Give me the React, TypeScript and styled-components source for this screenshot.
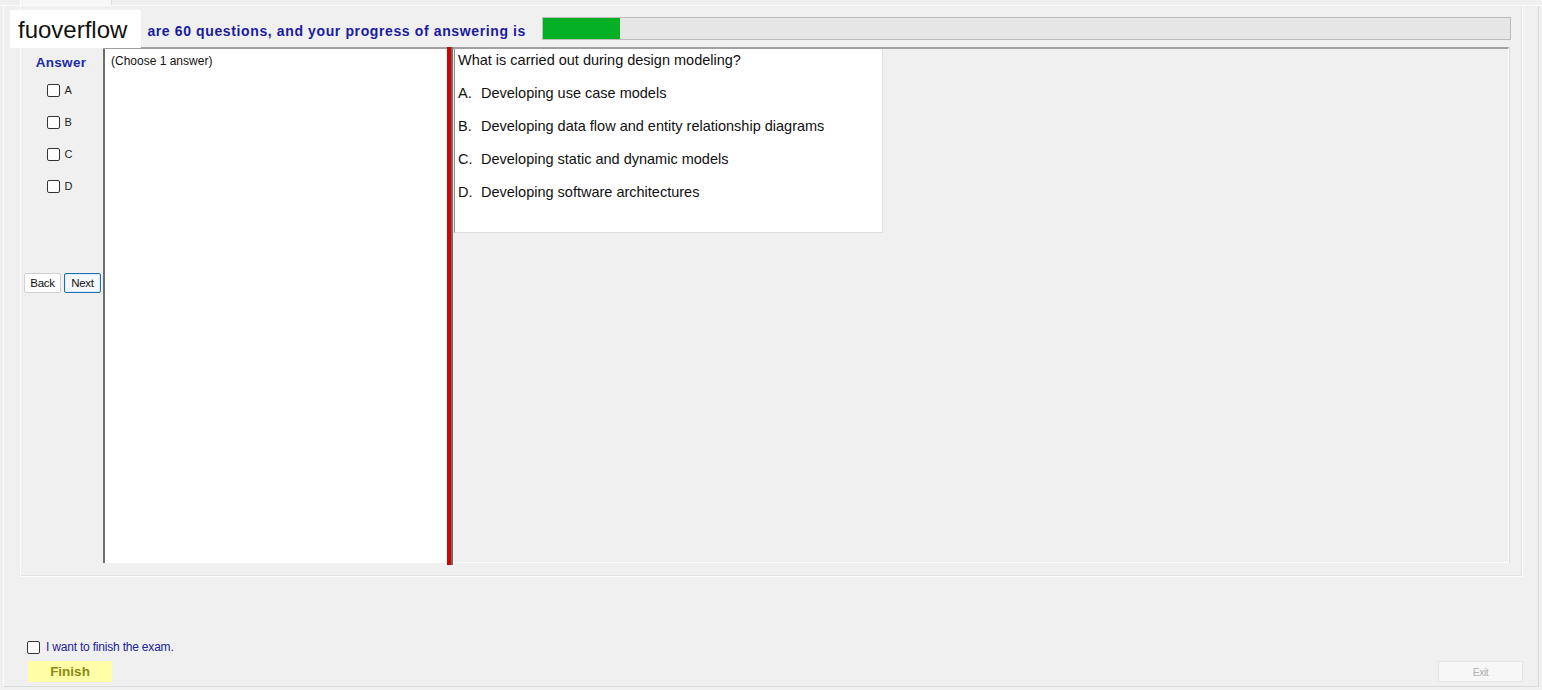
import React from "react";
import styled, { createGlobalStyle } from "styled-components";

const GlobalStyle = createGlobalStyle`
  html, body {
    margin: 0;
    padding: 0;
    background: #f0f0f0;
    font-family: "Liberation Sans", Arial, sans-serif;
  }
`;

const Window = styled.div`
  position: relative;
  width: 1542px;
  height: 690px;
  background: #f0f0f0;
  overflow: hidden;
`;

const TabStrip = styled.div`
  height: 5px;
  border-bottom: 1px solid #fbfbfb;
  display: flex;
  padding-left: 20px;
`;

const Tab = styled.div`
  width: 90px;
  height: 5px;
  background: #f7f7f7;
  border-left: 1px solid #fdfdfd;
  border-right: 1px solid #dcdcdc;
`;

const TabPage = styled.div`
  margin-left: 3px;
  width: 1536px;
  height: 681px;
  border-left: 1px solid #fafafa;
  border-right: 1px solid #dadada;
  border-bottom: 1px solid #dadada;
  box-sizing: border-box;
  display: flex;
  flex-direction: column;
`;

const Group = styled.div`
  margin-left: 16px;
  width: 1503px;
  height: 571px;
  box-sizing: border-box;
  border: 1px solid #fbfbfb;
  border-top: none;
  box-shadow: inset -1px -1px 0 #e2e2e2;
  display: flex;
  flex-direction: column;
`;

const HeaderRow = styled.div`
  display: flex;
  align-items: center;
  height: 24px;
  margin-top: 10px;
`;

const HeaderText = styled.div`
  font-size: 14px;
  letter-spacing: 0.62px;
  font-weight: bold;
  color: #1b1b9e;
  width: 505px;
  white-space: nowrap;
  text-align: right;
  padding-top: 6px;
`;

const Progress = styled.div`
  margin-left: 16px;
  width: 969px;
  height: 23px;
  box-sizing: border-box;
  border: 1px solid #bcbcbc;
  background: #e6e6e6;
`;

const ProgressFill = styled.div`
  height: 100%;
  background: #06b025;
`;

const ContentRow = styled.div`
  display: flex;
  margin-top: 7px;
  margin-left: 1px;
  width: 1487px;
  height: 516px;
`;

const AnswerCol = styled.div`
  width: 81px;
  display: flex;
  flex-direction: column;
  align-items: center;
  padding-top: 8px;
  box-sizing: border-box;
`;

const AnswerTitle = styled.div`
  font-size: 13.5px;
  letter-spacing: 0.3px;
  font-weight: bold;
  color: #1c2ca8;
  margin-left: -3px;
  margin-bottom: 13px;
`;

const OptionList = styled.div`
  display: flex;
  flex-direction: column;
  gap: 18px;
  margin-left: -6px;
`;

const OptionItem = styled.label`
  display: flex;
  align-items: center;
  gap: 5px;
  font-size: 11px;
  color: #222;
  height: 14px;
`;

const Box = styled.span<{ $size?: number }>`
  display: inline-block;
  width: ${(p) => p.$size ?? 11}px;
  height: ${(p) => p.$size ?? 11}px;
  border: 1px solid #333;
  border-radius: 2px;
  background: #fff;
`;

const NavRow = styled.div`
  display: flex;
  gap: 3px;
  margin-top: 80px;
  margin-left: 0px;
`;

const NavButton = styled.button<{ $focused?: boolean }>`
  font-family: "Liberation Sans", Arial, sans-serif;
  font-size: 11.5px;
  letter-spacing: -0.3px;
  color: #111;
  height: 20px;
  width: 37px;
  padding: 0;
  border-radius: 2px;
  background: ${(p) => (p.$focused ? "#f4f9fd" : "#fdfdfd")};
  border: 1px solid ${(p) => (p.$focused ? "#1f6fb2" : "#d0d0d0")};
  box-shadow: ${(p) => (p.$focused ? "inset 0 0 0 1px #d6ecfa" : "none")};
`;

const SplitArea = styled.div`
  flex: 1;
  display: flex;
  border-top: 2px solid #a0a0a0;
  border-right: 1px solid #fdfdfd;
  box-shadow: 1px 0 0 #dcdcdc;
`;

const ChoicePane = styled.div`
  width: 344px;
  background: #fff;
  border-left: 2px solid #6d6d6d;
  padding: 5px 0 0 6px;
  font-size: 12px;
  color: #111;
  box-sizing: border-box;
`;

const Splitter = styled.div`
  width: 6px;
  background: #d50000;
  border-right: 2px solid #6a6a6a;
  box-sizing: border-box;
  margin-top: -2px;
  height: 518px;
`;

const QuestionPane = styled.div`
  flex: 1;
  background: #f0f0f0;
  border-bottom: 1px solid #fbfbfb;
  padding-left: 1px;
`;

const QuestionBox = styled.div`
  width: 429px;
  height: 184px;
  box-sizing: border-box;
  background: #fff;
  border-left: 1px solid #8c8c8c;
  border-right: 1px solid #e0e0e0;
  border-bottom: 1px solid #e0e0e0;
  padding: 3px 0 0 3px;
  font-size: 14.5px;
  color: #111;
`;

const QuestionLine = styled.div`
  height: 33px;
  line-height: 17px;
  white-space: nowrap;
`;

const Letter = styled.span`
  display: inline-block;
  width: 23px;
`;

const Footer = styled.div`
  flex: 1;
  display: flex;
  justify-content: space-between;
  align-items: flex-end;
  padding: 0 15px 4px 23px;
`;

const FinishBlock = styled.div`
  display: flex;
  flex-direction: column;
  gap: 7px;
`;

const ConfirmLabel = styled.label`
  display: flex;
  align-items: center;
  gap: 6px;
  font-size: 12px;
  color: #22229a;
  letter-spacing: -0.2px;
`;

const FinishButton = styled.div`
  margin-left: 1px;
  width: 84px;
  height: 21px;
  background: #ffffa8;
  color: #8a8a14;
  font-size: 13.5px;
  font-weight: bold;
  display: flex;
  align-items: center;
  justify-content: center;
`;

const ExitButton = styled.div`
  width: 85px;
  height: 21px;
  box-sizing: border-box;
  background: #f7f7f7;
  border: 1px solid #e4e4e4;
  color: #b0b0b0;
  font-size: 10.5px;
  letter-spacing: -0.5px;
  display: flex;
  align-items: center;
  justify-content: center;
`;

const Watermark = styled.div`
  position: absolute;
  left: 10px;
  top: 10px;
  width: 131px;
  height: 38px;
  background: #fff;
  font-size: 24px;
  color: #111;
  padding: 7px 0 0 8px;
  box-sizing: border-box;
  line-height: 26px;
`;

const options = [
  "Developing use case models",
  "Developing data flow and entity relationship diagrams",
  "Developing static and dynamic models",
  "Developing software architectures",
];

export default function App() {
  const progress = 77 / 967;
  return (
    <Window>
      <GlobalStyle />
      <TabStrip>
        <Tab />
      </TabStrip>
      <TabPage>
        <Group>
          <HeaderRow>
            <HeaderText>are 60 questions, and your progress of answering is</HeaderText>
            <Progress>
              <ProgressFill style={{ width: `${progress * 100}%` }} />
            </Progress>
          </HeaderRow>
          <ContentRow>
            <AnswerCol>
              <AnswerTitle>Answer</AnswerTitle>
              <OptionList>
                {["A", "B", "C", "D"].map((l) => (
                  <OptionItem key={l}>
                    <Box />
                    {l}
                  </OptionItem>
                ))}
              </OptionList>
              <NavRow>
                <NavButton>Back</NavButton>
                <NavButton $focused>Next</NavButton>
              </NavRow>
            </AnswerCol>
            <SplitArea>
              <ChoicePane>(Choose 1 answer)</ChoicePane>
              <Splitter />
              <QuestionPane>
                <QuestionBox>
                  <QuestionLine>What is carried out during design modeling?</QuestionLine>
                  {options.map((o, i) => (
                    <QuestionLine key={o}>
                      <Letter>{"ABCD"[i]}.</Letter>
                      {o}
                    </QuestionLine>
                  ))}
                </QuestionBox>
              </QuestionPane>
            </SplitArea>
          </ContentRow>
        </Group>
        <Footer>
          <FinishBlock>
            <ConfirmLabel>
              <Box $size={11} />
              I want to finish the exam.
            </ConfirmLabel>
            <FinishButton>Finish</FinishButton>
          </FinishBlock>
          <ExitButton>Exit</ExitButton>
        </Footer>
      </TabPage>
      <Watermark>fuoverflow</Watermark>
    </Window>
  );
}
